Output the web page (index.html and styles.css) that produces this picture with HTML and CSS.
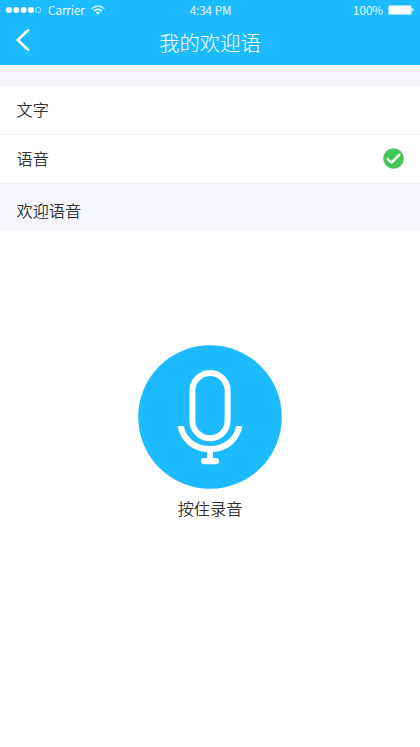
FILE: index.html
```html
<!DOCTYPE html>
<html lang="zh-CN">
<head>
<meta charset="utf-8">
<title>我的欢迎语</title>
<link rel="stylesheet" href="styles.css">
</head>
<body>
<header class="header">
  <div class="status">
    <div class="status-left">
      <svg class="signal" width="36" height="8" viewBox="0 0 36 8"><g fill="#fff"><circle cx="4" cy="4" r="3"/><circle cx="11.3" cy="4" r="3"/><circle cx="18.6" cy="4" r="3"/><circle cx="25.9" cy="4" r="3"/></g><circle cx="33.2" cy="4" r="2.7" fill="none" stroke="#fff" stroke-width=".6"/></svg>
      <span class="carrier">Carrier</span>
      <svg class="wifi" width="14" height="10" viewBox="0 0 14 10" fill="none" stroke="#fff"><path d="M.7 3.8Q7-1.8 13.3 3.8" stroke-width="1.3" opacity=".8"/><path d="M3 6Q7 2.4 11 6" stroke-width="1.5"/><path d="M4.8 7.6Q7 5.7 9.2 7.6L7 9.7Z" fill="#fff" stroke="none"/></svg>
    </div>
    <span class="time">4:34 PM</span>
    <div class="status-right">
      <span>100%</span>
      <svg class="battery" width="26" height="10" viewBox="0 0 26 10"><rect x=".5" y=".5" width="23" height="9" rx="1.5" fill="#fff" fill-opacity=".6" stroke="#fff" stroke-opacity=".4"/><rect x="1.3" y="1.3" width="21.4" height="7.4" rx=".8" fill="#fff"/><path d="M24.2 3.3q1.5.3 1.5 1.7t-1.5 1.7z" fill="#fff"/></svg>
    </div>
  </div>
  <div class="nav">
    <svg class="back" width="14" height="22" viewBox="0 0 14 22"><path d="M12 1.3 1.8 11 12 20.7" fill="none" stroke="#fff" stroke-width="2.6" stroke-linecap="round"/></svg>
    <h1 class="title">我的欢迎语</h1>
    <span></span>
  </div>
</header>
<main>
  <div class="options">
    <div class="option"><span class="label">文字</span></div>
    <div class="option option-voice"><span class="label">语音</span>
      <svg class="check" width="21" height="21" viewBox="0 0 21 21"><circle cx="10.5" cy="10.5" r="10.3" fill="#46c75b"/><path d="m4.8 11.1 3.9 3.6 7.5-7.9" fill="none" stroke="#fff" stroke-width="2.4" stroke-linecap="round" stroke-linejoin="round"/></svg>
    </div>
  </div>
  <h2 class="section">欢迎语音</h2>
  <div class="recorder">
    <svg width="144" height="144" viewBox="0 0 144 144"><circle cx="72" cy="72" r="71.8" fill="#1cbbff"/><rect x="54.4" y="28" width="35.2" height="65.300" rx="17.6" fill="none" stroke="#fff" stroke-width="6"/><path d="M39.7 81H45.8C48.5 93.5 58.8 101 72 101S95.500 93.500 98.200 81H104.300C101.500 97 89 107.200 72 107.200S42.500 97 39.700 81Z" fill="#fff"/><path d="M72 105v10" fill="none" stroke="#fff" stroke-width="6"/><rect x="63" y="113" width="18" height="6.3" rx="3" fill="#fff"/></svg>
    <p class="hint">按住录音</p>
  </div>
</main>
</body>
</html>
```
FILE: styles.css
```css
* { box-sizing: border-box; }
body {
  margin: 0;
  min-height: 747px;
  background: #fff;
  color: #333;
  font-family: "Noto Sans CJK SC", sans-serif;
  font-size: 16.2px;
  font-weight: 350;
}
svg { display: block; flex: none; }
.header { height: 65px; background: #1cbbff; color: #fff; }
.status {
  display: grid;
  grid-template-columns: 1fr auto 1fr;
  align-items: center;
  height: 20px;
  padding: 0 6px 0 5px;
  font-size: 11.7px;
  line-height: 20px;
}
.status-left, .status-right { display: flex; align-items: center; }
.status-right { justify-content: flex-end; gap: 5px; }
.time { padding-left: 2px; }
.carrier { margin: 0 6px 0 7px; }
.nav {
  display: grid;
  grid-template-columns: 1fr auto 1fr;
  align-items: center;
  height: 45px;
  padding: 0 16px;
}
.back { margin-bottom: 6px; }
.title { margin: 0; font-size: 20.3px; line-height: 45px; font-weight: 300; }
.options { padding-top: 20px; background: #f5f6fa; }
.option {
  display: flex;
  align-items: center;
  justify-content: space-between;
  height: 49px;
  padding: 0 16px 0 16.500px;
  background: #fff;
  border-top: 1px solid #f3f3f5;
}
.label { padding-bottom: 2px; }
.check { margin-bottom: 2px; }
.option-voice { height: 50px; border-bottom: 1px solid #f0f0f3; }
.section {
  height: 47px;
  margin: 0;
  padding: 7px 16.500px 0;
  background: #f5f6fa;
  font-size: inherit;
  font-weight: inherit;
  line-height: 38px;
}
.recorder { display: flex; flex-direction: column; align-items: center; padding-top: 114px; }
.hint { margin: 7px 0 0; line-height: 24px; }
```
